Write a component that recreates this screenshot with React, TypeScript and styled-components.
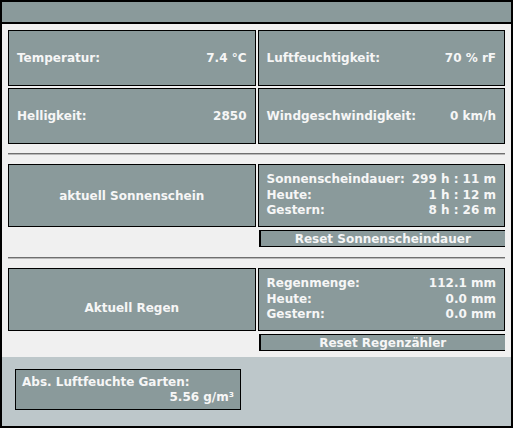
import { createGlobalStyle, styled } from "styled-components";

const GlobalStyle = createGlobalStyle`
  html, body {
    margin: 0;
    padding: 0;
    background: #ffffff;
  }
  body {
    font-family: "DejaVu Sans", Verdana, sans-serif;
  }
`;

const Frame = styled.div`
  width: 513px;
  height: 428px;
  box-sizing: border-box;
  border: 2px solid #000;
  display: flex;
  flex-direction: column;
  background: #f0f0f0;
`;

const Header = styled.div`
  height: 20px;
  background: #8a9a9b;
  border-bottom: 2px solid #000;
`;

const Content = styled.div`
  padding: 6px 6px 0 6px;
  display: flex;
  flex-direction: column;
`;

const Grid = styled.div`
  display: grid;
  grid-template-columns: 1fr 1fr;
  grid-auto-rows: 56px;
  gap: 2px;
`;

const Card = styled.div<{ $center?: boolean; $shift?: number }>`
  box-sizing: border-box;
  border: 1px solid #000;
  background: #8a9a9b;
  color: #f6f6f6;
  font-size: 12px;
  font-weight: bold;
  display: flex;
  align-items: center;
  justify-content: ${(p) => (p.$center ? "center" : "space-between")};
  padding: ${(p) => (p.$shift ? `${p.$shift}px` : "0")} 8px 0 8px;
`;

const Separator = styled.div<{ $top: number }>`
  height: 2px;
  background: #6f6f6f;
  border-bottom: 1px solid #b8b8b8;
  box-sizing: border-box;
  margin: ${(p) => p.$top}px 0 9px 0;
`;

const Pair = styled.div<{ $height: number }>`
  display: grid;
  grid-template-columns: 1fr 1fr;
  grid-template-rows: ${(p) => p.$height}px auto;
  column-gap: 2px;
`;

const Lines = styled.div`
  display: flex;
  flex-direction: column;
  width: 100%;
  line-height: 15.5px;
`;

const Line = styled.div`
  display: flex;
  justify-content: space-between;
  white-space: pre;
`;

const ResetButton = styled.div`
  grid-column: 2;
  margin-top: 3px;
  margin-left: 1px;
  height: 17px;
  box-sizing: border-box;
  border: 1px solid #000;
  border-left-width: 2px;
  border-right: none;
  background: #8a9a9b;
  color: #f6f6f6;
  font-size: 12px;
  font-weight: bold;
  display: flex;
  align-items: center;
  justify-content: center;
`;

const Bottom = styled.div`
  margin-top: 6px;
  flex: 1;
  background: #bdc7ca;
  padding: 12px 0 0 13px;
`;

const SmallCard = styled.div`
  width: 226px;
  height: 41px;
  box-sizing: border-box;
  border: 1px solid #000;
  background: #8a9a9b;
  color: #f6f6f6;
  font-size: 12px;
  font-weight: bold;
  padding: 5px 6px 0 6px;
  line-height: 15px;
  display: flex;
  flex-direction: column;
`;

const RightText = styled.div`
  text-align: right;
`;

export default function App() {
  return (
    <>
      <GlobalStyle />
      <Frame>
        <Header />
        <Content>
          <Grid>
            <Card>
              <span>Temperatur:</span>
              <span>7.4 °C</span>
            </Card>
            <Card>
              <span>Luftfeuchtigkeit:</span>
              <span>70 % rF</span>
            </Card>
            <Card>
              <span>Helligkeit:</span>
              <span>2850</span>
            </Card>
            <Card>
              <span>Windgeschwindigkeit:</span>
              <span>0 km/h</span>
            </Card>
          </Grid>

          <Separator $top={9} />

          <Pair $height={63}>
            <Card $center>aktuell Sonnenschein</Card>
            <Card>
              <Lines>
                <Line>
                  <span>Sonnenscheindauer:</span>
                  <span>299 h : 11 m</span>
                </Line>
                <Line>
                  <span>Heute:</span>
                  <span>1 h : 12 m</span>
                </Line>
                <Line>
                  <span>Gestern:</span>
                  <span>8 h : 26 m</span>
                </Line>
              </Lines>
            </Card>
            <ResetButton>Reset Sonnenscheindauer</ResetButton>
          </Pair>

          <Separator $top={10} />

          <Pair $height={63}>
            <Card $center $shift={16}>
              Aktuell Regen
            </Card>
            <Card>
              <Lines>
                <Line>
                  <span>Regenmenge:</span>
                  <span>112.1 mm</span>
                </Line>
                <Line>
                  <span>Heute:</span>
                  <span>0.0 mm</span>
                </Line>
                <Line>
                  <span>Gestern:</span>
                  <span>0.0 mm</span>
                </Line>
              </Lines>
            </Card>
            <ResetButton>Reset Regenzähler</ResetButton>
          </Pair>
        </Content>
        <Bottom>
          <SmallCard>
            <div>Abs. Luftfeuchte Garten:</div>
            <RightText>5.56 g/m³</RightText>
          </SmallCard>
        </Bottom>
      </Frame>
    </>
  );
}
